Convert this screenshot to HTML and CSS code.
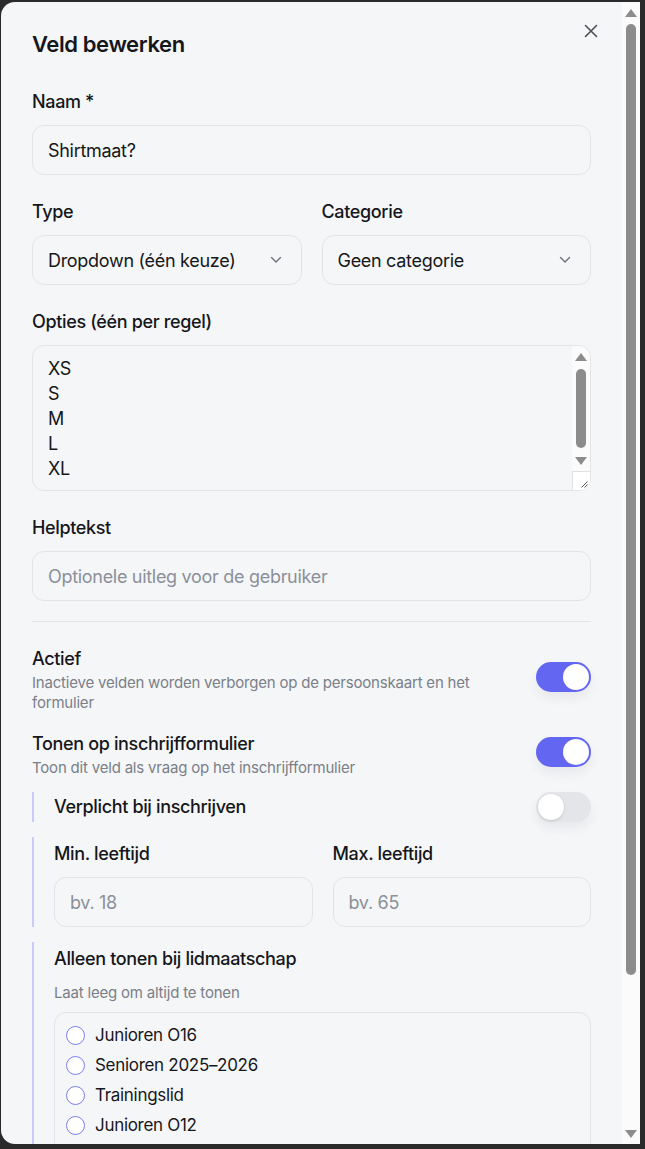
FILE: index.html
```html
<!DOCTYPE html>
<html lang="nl">
<head>
    <meta charset="UTF-8">
    <meta name="viewport" content="width=device-width, initial-scale=1.0">
    <title>Veld bewerken</title>
    <link rel="stylesheet" href="styles.css">
</head>
<body>
    <div class="dialog">
        <div class="dialog-body">
            <div class="dialog-head">
                <h2>Veld bewerken</h2>
                <button class="close" type="button" aria-label="Sluiten">
                    <svg width="14" height="14" viewBox="0 0 14 14"><path d="M1.5 1.5L12.5 12.5M12.5 1.5L1.5 12.5" stroke="#4b4f57" stroke-width="1.6" stroke-linecap="round"/></svg>
                </button>
            </div>

            <div class="field">
                <label>Naam *</label>
                <input class="input" type="text" value="Shirtmaat?">
            </div>

            <div class="row">
                <div class="field">
                    <label>Type</label>
                    <div class="select">
                        <span>Dropdown (één keuze)</span>
                        <svg width="12" height="8" viewBox="0 0 12 8"><path d="M1.5 1.5L6 6L10.5 1.5" fill="none" stroke="#6b7079" stroke-width="1.4" stroke-linecap="round" stroke-linejoin="round"/></svg>
                    </div>
                </div>
                <div class="field">
                    <label>Categorie</label>
                    <div class="select">
                        <span>Geen categorie</span>
                        <svg width="12" height="8" viewBox="0 0 12 8"><path d="M1.5 1.5L6 6L10.5 1.5" fill="none" stroke="#6b7079" stroke-width="1.4" stroke-linecap="round" stroke-linejoin="round"/></svg>
                    </div>
                </div>
            </div>

            <div class="field">
                <label>Opties (één per regel)</label>
                <div class="textarea-box">
                    <textarea class="textarea" rows="5">XS
S
M
L
XL</textarea>
                    <div class="scrollbar">
                        <span class="sb-btn"><i class="arrow-up"></i></span>
                        <div class="sb-track"><div class="sb-thumb options-thumb"></div></div>
                        <span class="sb-btn"><i class="arrow-down"></i></span>
                        <span class="resizer">
                            <svg width="8" height="8" viewBox="0 0 8 8"><path d="M7.5 1.5L1.5 7.5M7.5 4.5L4.5 7.5" stroke="#555" stroke-width="1"/></svg>
                        </span>
                    </div>
                </div>
            </div>

            <div class="field">
                <label>Helptekst</label>
                <input class="input" type="text" placeholder="Optionele uitleg voor de gebruiker">
            </div>

            <hr class="divider">

            <div class="switch-row">
                <div class="switch-text">
                    <div class="switch-title">Actief</div>
                    <div class="switch-desc">Inactieve velden worden verborgen op de persoonskaart en het formulier</div>
                </div>
                <span class="toggle on"></span>
            </div>

            <div class="switch-row">
                <div class="switch-text">
                    <div class="switch-title">Tonen op inschrijfformulier</div>
                    <div class="switch-desc">Toon dit veld als vraag op het inschrijfformulier</div>
                </div>
                <span class="toggle on"></span>
            </div>

            <div class="sub sub-required">
                <div class="switch-title">Verplicht bij inschrijven</div>
                <span class="toggle"></span>
            </div>

            <div class="sub">
                <div class="row">
                    <div class="field">
                        <label>Min. leeftijd</label>
                        <input class="input" type="text" placeholder="bv. 18">
                    </div>
                    <div class="field">
                        <label>Max. leeftijd</label>
                        <input class="input" type="text" placeholder="bv. 65">
                    </div>
                </div>
            </div>

            <div class="sub">
                <label>Alleen tonen bij lidmaatschap</label>
                <div class="hint">Laat leeg om altijd te tonen</div>
                <div class="checklist">
                    <div class="check-item"><span class="radio"></span>Junioren O16</div>
                    <div class="check-item"><span class="radio"></span>Senioren 2025–2026</div>
                    <div class="check-item"><span class="radio"></span>Trainingslid</div>
                    <div class="check-item"><span class="radio"></span>Junioren O12</div>
                </div>
            </div>
        </div>

        <!-- page scrollbar of the dialog -->
        <div class="scrollbar">
            <span class="sb-btn"><i class="arrow-up"></i></span>
            <div class="sb-track"><div class="sb-thumb dialog-thumb"></div></div>
            <span class="sb-btn"><i class="arrow-down"></i></span>
        </div>
    </div>
</body>
</html>
```

FILE: styles.css
```css
* {
    box-sizing: border-box;
}

html, body {
    height: 100%;
}

body {
    margin: 0;
    padding: 2px 5px 5px 1px;
    background-color: #2a2a2b;
    font-family: 'Inter', 'Noto Sans', sans-serif;
    color: #15171a;
    display: flex;
}

.dialog {
    flex: 1;
    display: flex;
    overflow: hidden;
    background: #f5f6f8;
    border-radius: 14px 0 0 14px;
}

.dialog-body {
    flex: 1;
    min-width: 0;
    overflow: hidden;
    padding: 27px 31px 32px 31px;
}

/* scrollbar column: arrow buttons, track, thumb */
.scrollbar {
    flex: none;
    width: 18px;
    display: flex;
    flex-direction: column;
    background: #fbfbfb;
}

.sb-btn {
    flex: none;
    height: 19px;
    display: flex;
    align-items: center;
    justify-content: center;
}

.arrow-up,
.arrow-down {
    width: 0;
    height: 0;
    border-left: 6px solid transparent;
    border-right: 6px solid transparent;
}

.arrow-up {
    border-bottom: 8px solid #8c8c8c;
    margin-top: 2px;
}

.arrow-down {
    border-top: 8px solid #8c8c8c;
    margin-bottom: 1px;
}

.sb-track {
    flex: 1;
    padding: 0 4px;
}

.sb-thumb {
    background: #8c8c8c;
    border-radius: 6px;
}

.dialog-thumb {
    margin-top: 3px;
    height: 951px;
}

.options-thumb {
    margin-top: 4px;
    height: 79px;
}

.resizer {
    flex: none;
    height: 19px;
    border-top: 1px solid #e1e1e1;
    border-left: 1px solid #e1e1e1;
    background: #fff;
    display: flex;
    align-items: flex-end;
    justify-content: flex-end;
    padding: 0 2px 2px 0;
}

.resizer svg {
    display: block;
}

.dialog-head {
    display: flex;
    justify-content: space-between;
    align-items: flex-start;
    margin-bottom: 31px;
}

.dialog-head h2 {
    margin: 0;
    font-size: 22px;
    line-height: 30px;
    font-weight: 600;
    letter-spacing: -0.4px;
}

.close {
    background: none;
    border: 0;
    padding: 0;
    margin-top: -8px;
    margin-right: -10px;
    width: 20px;
    height: 20px;
    display: flex;
    align-items: center;
    justify-content: center;
}

.field {
    display: flex;
    flex-direction: column;
    margin-bottom: 25px;
}

label {
    display: block;
    font-size: 18px;
    line-height: 24px;
    font-weight: 500;
    letter-spacing: -0.35px;
    margin-bottom: 11px;
}

.row {
    display: grid;
    grid-template-columns: 1fr 1fr;
    gap: 20px;
}

.input, .select {
    width: 100%;
    height: 50px;
    border: 1px solid #e2e4e8;
    border-radius: 12px;
    background: #f5f6f8;
    padding: 0 15px;
    font-family: inherit;
    font-size: 18px;
    color: #15171a;
    letter-spacing: -0.3px;
    outline: none;
}

.input::placeholder {
    color: #8b9099;
}

.select {
    display: flex;
    align-items: center;
    justify-content: space-between;
    padding-right: 19px;
}

.textarea-box {
    display: flex;
    height: 146px;
    border: 1px solid #e2e4e8;
    border-radius: 12px;
    overflow: hidden;
}

.textarea {
    flex: 1;
    border: 0;
    background: transparent;
    padding: 10px 15px;
    font-family: inherit;
    font-size: 18px;
    line-height: 25px;
    letter-spacing: -0.3px;
    color: #15171a;
    resize: none;
    overflow: hidden;
    outline: none;
}

.divider {
    border: 0;
    border-top: 1px solid #e2e4e8;
    margin: -5px 0 25px;
}

.switch-row {
    display: flex;
    align-items: center;
    justify-content: space-between;
    gap: 20px;
    margin-bottom: 19px;
}

.switch-row + .switch-row {
    margin-bottom: 14px;
}

.switch-text {
    flex: 0 1 480px;
}

.switch-title {
    font-size: 18px;
    line-height: 24px;
    font-weight: 500;
    letter-spacing: -0.35px;
}

.switch-desc {
    font-size: 15px;
    line-height: 20px;
    color: #7a7f88;
    letter-spacing: -0.2px;
    margin-top: 2px;
}

.toggle {
    position: relative;
    flex: none;
    width: 55px;
    height: 30px;
    border-radius: 15px;
    background: #e4e5e9;
    margin-bottom: 6px;
    box-shadow: 0 6px 12px rgba(20, 24, 40, 0.06);
}

.toggle::after {
    content: "";
    position: absolute;
    top: 2px;
    left: 2px;
    width: 26px;
    height: 26px;
    border-radius: 50%;
    background: #fff;
    box-shadow: 0 1px 3px rgba(0, 0, 0, 0.15);
}

.toggle.on {
    background: #6366f1;
}

.toggle.on::after {
    left: 27px;
    box-shadow: none;
}

.sub {
    border-left: 2px solid #c9cbfa;
    padding-left: 20px;
    margin-bottom: 15px;
    padding-top: 5px;
}

.sub .field {
    margin-bottom: 0;
}

.sub-required {
    display: flex;
    align-items: center;
    justify-content: space-between;
    padding-top: 0;
}

.sub-required .toggle {
    margin-bottom: 0;
}

.sub > label {
    margin-bottom: 12px;
}

.hint {
    font-size: 15px;
    line-height: 20px;
    color: #7a7f88;
    letter-spacing: -0.2px;
    margin-bottom: 9px;
}

.checklist {
    border: 1px solid #e2e4e8;
    border-radius: 12px;
    padding: 7px 11px 40px;
}

.check-item {
    display: flex;
    align-items: center;
    gap: 10px;
    height: 30px;
    font-size: 17px;
    letter-spacing: -0.3px;
}

.radio {
    width: 19px;
    height: 19px;
    border: 1.5px solid #7b7ef0;
    border-radius: 50%;
    background: #fff;
}
```
